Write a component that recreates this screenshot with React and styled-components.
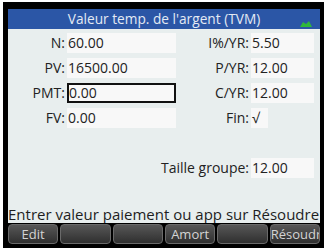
import React from 'react';
import styled, { createGlobalStyle } from 'styled-components';

const GlobalStyle = createGlobalStyle`
  html, body {
    margin: 0;
    padding: 0;
    background: #ffffff;
  }
  body {
    font-family: "Open Sans", "DejaVu Sans", sans-serif;
  }
`;

const Frame = styled.div`
  margin: 2px 0 0 3px;
  width: 321px;
  height: 246px;
  box-sizing: border-box;
  padding: 7px 4px 1px 5px;
  background: #000;
  display: flex;
  flex-direction: column;
`;

const Header = styled.div`
  position: relative;
  height: 20px;
  background: #2b56a6;
  color: #e4eaf4;
  font-size: 13.7px;
  line-height: 20px;
  text-align: center;
`;

const Indicator = styled.svg`
  position: absolute;
  right: 8px;
  top: 12px;
`;

const Content = styled.div`
  height: 194px;
  background: #e8eeee;
  display: flex;
  flex-direction: column;
  padding-top: 4px;
  box-sizing: border-box;
`;

const Form = styled.div`
  display: grid;
  grid-template-columns: 59px 109px minmax(0, 1fr) 63px;
  grid-auto-rows: 20px;
  row-gap: 5px;
  padding-right: 6px;
  color: #222;
  font-size: 14px;
`;

const Label = styled.div`
  grid-column: ${p => p.$col};
  text-align: right;
  line-height: 20px;
  padding-right: 2px;
  white-space: nowrap;
`;

const Field = styled.div`
  grid-column: ${p => p.$col};
  justify-self: ${p => (p.$narrow ? 'start' : 'stretch')};
  width: ${p => (p.$narrow ? '17px' : 'auto')};
  background: #f8f8f8;
  box-sizing: border-box;
  padding-left: ${p => (p.$active ? '0px' : '1px')};
  border: ${p => (p.$active ? '2px solid #111' : 'none')};
  line-height: ${p => (p.$active ? '16px' : '20px')};
  white-space: nowrap;
  overflow: hidden;
`;

const Spacer = styled.div`
  grid-column: 1 / span 4;
`;

const Status = styled.div`
  margin-top: auto;
  color: #1e1e1e;
  font-size: 15px;
  line-height: 18px;
  white-space: nowrap;
  overflow: hidden;
`;

const Menu = styled.div`
  display: flex;
  gap: 2px;
  height: 24px;
  padding: 1px 0 3px;
  box-sizing: border-box;
`;

const MenuButton = styled.div`
  flex: 1;
  min-width: 0;
  border-radius: 4px;
  border: 1px solid #6a6a6a;
  background: linear-gradient(#575757, #2f2f2f);
  color: #d4d4d4;
  font-size: 13px;
  line-height: 18px;
  text-align: center;
  overflow: hidden;
  white-space: nowrap;
`;

const rows = [
  ['N:', '60.00', 'I%/YR:', '5.50'],
  ['PV:', '16500.00', 'P/YR:', '12.00'],
  ['PMT:', '0.00', 'C/YR:', '12.00'],
  ['FV:', '0.00', 'Fin:', '√'],
];

const menu = ['Edit', '', '', 'Amort', '', 'Résoudr'];

export default function App() {
  return (
    <>
      <GlobalStyle />
      <Frame>
        <Header>
          Valeur temp. de l'argent (TVM)
          <Indicator width="12" height="6" viewBox="0 0 12 6">
            <path d="M0 6 L3 1 L6 3 L9 0 L12 6 Z" fill="#2fb83a" />
          </Indicator>
        </Header>
        <Content>
          <Form>
            {rows.map(([l1, v1, l2, v2]) => (
              <React.Fragment key={l1}>
                <Label $col={1}>{l1}</Label>
                <Field $col={2} $active={l1 === 'PMT:'}>{v1}</Field>
                <Label $col={3}>{l2}</Label>
                <Field $col={4} $narrow={l2 === 'Fin:'}>{v2}</Field>
              </React.Fragment>
            ))}
            <Spacer />
            <Label $col="1 / span 3">Taille groupe:</Label>
            <Field $col={4}>12.00</Field>
          </Form>
          <Status>Entrer valeur paiement ou app sur Résoudre</Status>
        </Content>
        <Menu>
          {menu.map((m, i) => (
            <MenuButton key={i}>{m}</MenuButton>
          ))}
        </Menu>
      </Frame>
    </>
  );
}
